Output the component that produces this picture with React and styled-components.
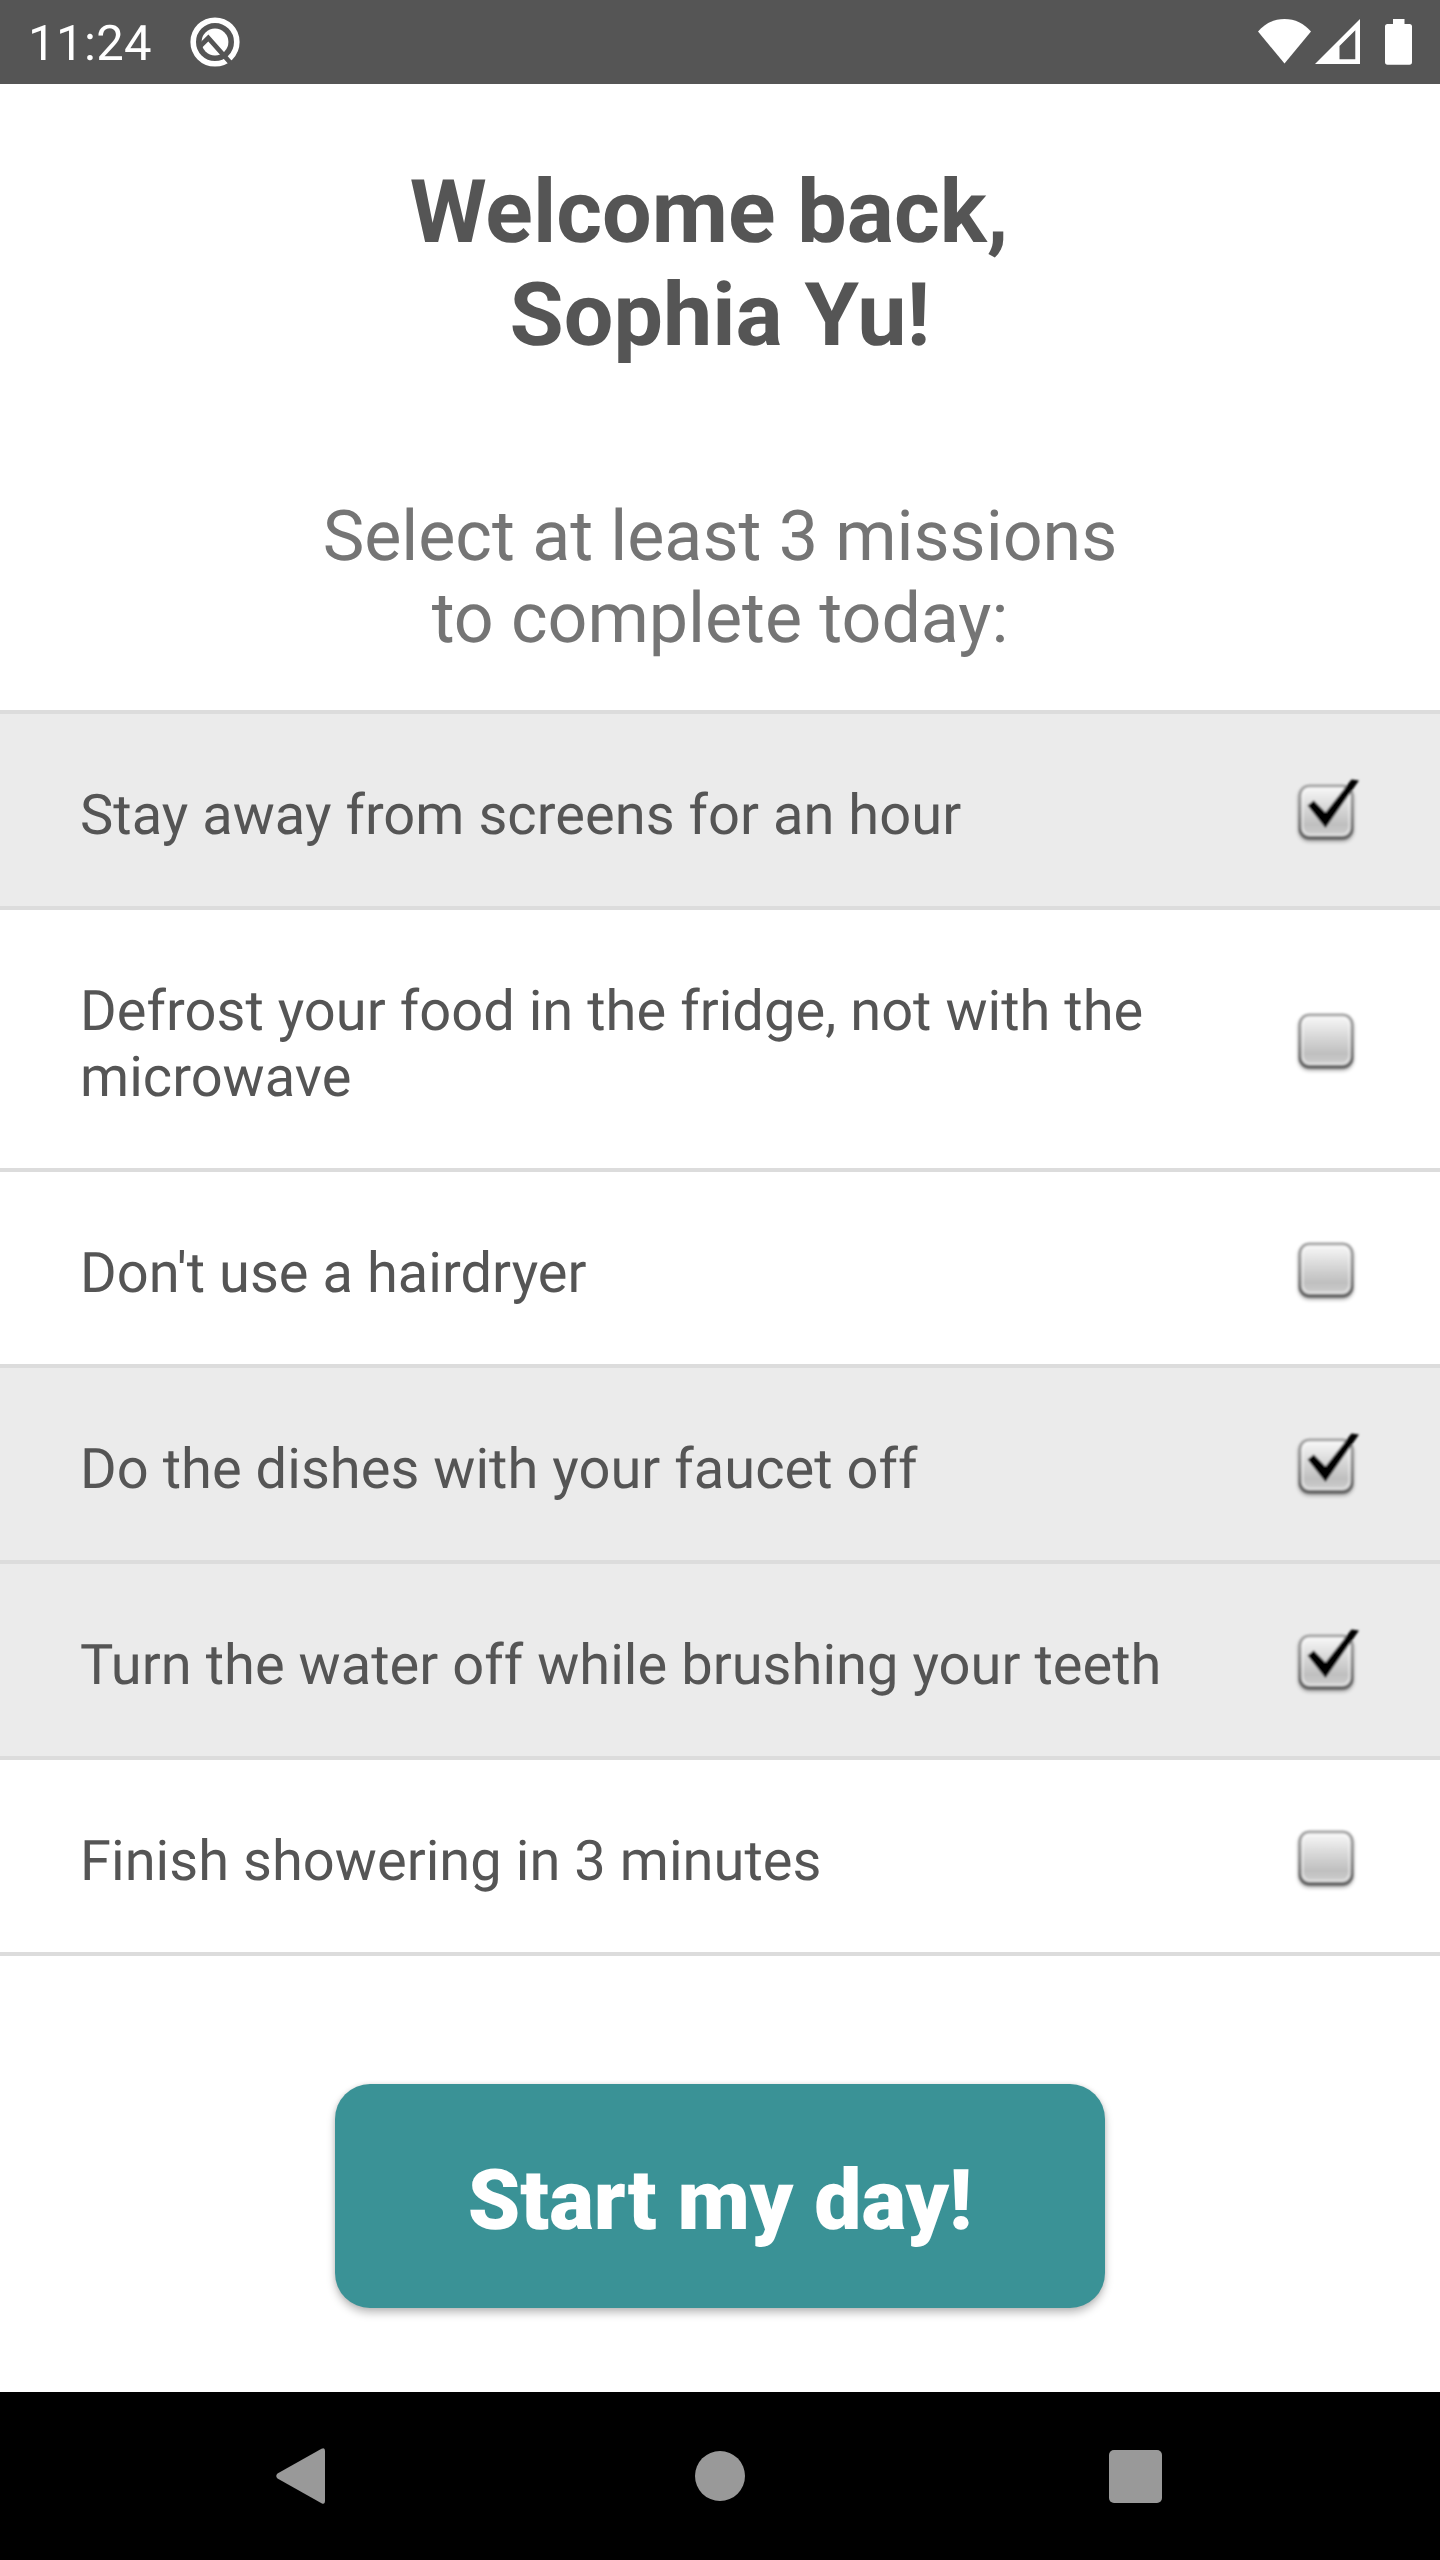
import React, { useState } from 'react'
import styled, { createGlobalStyle } from 'styled-components';

const GlobalStyle = createGlobalStyle`
    body {
        margin: 0;
        background: #ffffff;
        font-family: Roboto, sans-serif;
        text-rendering: geometricPrecision;
    }
`;

const missions = [
    { id: 1, text: 'Stay away from screens for an hour', done: true },
    { id: 2, text: 'Defrost your food in the fridge, not with the microwave', done: false },
    { id: 3, text: "Don't use a hairdryer", done: false },
    { id: 4, text: 'Do the dishes with your faucet off', done: true },
    { id: 5, text: 'Turn the water off while brushing your teeth', done: true },
    { id: 6, text: 'Finish showering in 3 minutes', done: false },
]

function StatusBar() {
    return (
        <StatusWrapper>
            <Clock>11:24</Clock>
            <svg width="50" height="50" viewBox="0 0 50 50">
                <circle cx="25" cy="25" r="21.8" fill="none" stroke="#fff" strokeWidth="5.6" />
                <circle cx="25" cy="25" r="13.4" fill="#fff" />
                <path d="M10 29.300L18.300 21L41 46.500" fill="none" stroke="#555" strokeWidth="4.8" />
            </svg>
            <Spacer />
            <StatusIcons>
                {/* wifi */}
                <svg width="53" height="45" viewBox="0 0 53 45">
                    <path d="M0 12.500C7 4.500 16 0 26.500 0S46 4.500 53 12.500L26.500 44.500Z" fill="#fff" />
                </svg>
                {/* signal */}
                <svg width="45" height="45" viewBox="0 0 45 45">
                    <path fillRule="evenodd" d="M0 45L45 0V45ZM24.500 27V40.300H40.300V11.300Z" fill="#fff" />
                </svg>
                {/* battery */}
                <Battery width="27" height="46" viewBox="0 0 27 46">
                    <path d="M8 0H19.500V5H24.500Q27 5 27 7.500V43Q27 45.700 24.500 45.700H2.500Q0 45.700 0 43V7.500Q0 5 2.500 5H8Z" fill="#fff" />
                </Battery>
            </StatusIcons>
        </StatusWrapper>
    )
}

function CheckBox({ checked }) {
    return (
        <svg width="84" height="84" viewBox="0 0 84 84">
            <defs>
                <linearGradient id="frame" x1="0" y1="0" x2="0" y2="1">
                    <stop offset="0" stopColor="#acacac" />
                    <stop offset="0.5" stopColor="#8c8c8c" />
                    <stop offset="1" stopColor="#606060" />
                </linearGradient>
                <linearGradient id="rim" x1="0" y1="0" x2="0" y2="1">
                    <stop offset="0" stopColor="#fbfbfb" />
                    <stop offset="1" stopColor="#dedede" />
                </linearGradient>
                <linearGradient id="face" x1="0" y1="0" x2="0" y2="1">
                    <stop offset="0" stopColor="#f4f4f4" />
                    <stop offset="0.5" stopColor="#d2d2d2" />
                    <stop offset="0.8" stopColor="#bfbfbf" />
                    <stop offset="1" stopColor="#cbcbcb" />
                </linearGradient>
                <filter id="shade" x="-20%" y="-20%" width="140%" height="140%">
                    <feGaussianBlur stdDeviation="2" />
                </filter>
                <filter id="soft" x="-10%" y="-10%" width="120%" height="120%">
                    <feGaussianBlur stdDeviation="0.8" />
                </filter>
            </defs>
            <rect x="14.500" y="17" width="55" height="54.500" rx="11" fill="#000" opacity="0.33" filter="url(#shade)" />
            <g filter="url(#soft)">
                <rect x="14.500" y="14.500" width="55" height="55" rx="11" fill="url(#frame)" />
                <rect x="17.500" y="17.500" width="49" height="48.500" rx="8" fill="url(#rim)" />
                <rect x="19.500" y="19.500" width="45" height="44" rx="6.500" fill="url(#face)" />
                {checked && <path d="M23.500 35.500L29.800 30.500L41.500 42.500L67.500 9.500L75 10.500L41.500 58Z" fill="#000" />}
            </g>
        </svg>
    )
}

function NavigationBar() {
    return (
        <NavWrapper>
            <NavButton>
                <svg width="58" height="56" viewBox="0 0 58 56">
                    <path d="M1.500 25.500L45.500 0.800Q49 -1 49 3V53Q49 57 45.500 55.200L1.500 30.500Q-1 28 1.500 25.500Z" fill="#999" />
                </svg>
            </NavButton>
            <NavButton>
                <svg width="50" height="50" viewBox="0 0 50 50">
                    <circle cx="25" cy="25" r="25" fill="#999" />
                </svg>
            </NavButton>
            <NavButton>
                <svg width="53" height="53" viewBox="0 0 53 53">
                    <rect width="53" height="53" rx="5" fill="#999" />
                </svg>
            </NavButton>
        </NavWrapper>
    )
}

function App() {
    const [items, setItems] = useState(missions)

    const toggle = (id) => {
        setItems(items.map(item => item.id === id ? { ...item, done: !item.done } : item))
    }

    return (
        <Screen>
            <GlobalStyle />
            <StatusBar />
            <Content>
                <Title>Welcome back,&nbsp;<br />Sophia Yu!</Title>
                <Subtitle>Select at least 3 missions<br />to complete today:</Subtitle>
                <MissionList>
                    {items.map(item => (
                        <MissionRow key={item.id} $done={item.done} onClick={() => toggle(item.id)}>
                            <MissionText>{item.text}</MissionText>
                            <CheckBox checked={item.done} />
                        </MissionRow>
                    ))}
                </MissionList>
                <StartButton>Start my day!</StartButton>
            </Content>
            <NavigationBar />
        </Screen>
    )
}

const Screen = styled.div`
    display: flex;
    flex-direction: column;
    width: 1440px;
    height: 2560px;
    overflow: hidden;
`;

const StatusWrapper = styled.header`
    display: flex;
    align-items: center;
    flex: none;
    height: 84px;
    box-sizing: border-box;
    padding: 0 28px;
    background: #555555;
    color: #ffffff;
`;

const Clock = styled.span`
    width: 162px;
    font-size: 49px;
    line-height: 58px;
    letter-spacing: 0.4px;
    padding-top: 4px;
`;

const Spacer = styled.div`
    flex: 1;
`;

const StatusIcons = styled.div`
    display: flex;
    align-items: flex-start;
    gap: 4px;
    height: 46px;
`;

const Battery = styled.svg`
    margin-left: 21px;
`;

const Content = styled.main`
    display: flex;
    flex-direction: column;
    align-items: center;
    flex: 1;
`;

const Title = styled.h1`
    margin: 77px 0 0;
    color: #555555;
    font-size: 88px;
    line-height: 103px;
    font-weight: 700;
    text-align: center;
`;

const Subtitle = styled.p`
    margin: 129px 0 0;
    color: #757575;
    font-size: 70px;
    line-height: 82px;
    letter-spacing: -0.05px;
    text-align: center;
`;

const MissionList = styled.ul`
    width: 100%;
    margin: 50px 0 0;
    padding: 0;
    list-style: none;
    border-top: 4px solid #dcdcdc;
`;

const MissionRow = styled.li`
    display: flex;
    align-items: center;
    justify-content: space-between;
    padding: 0 72px 0 80px;
    border-bottom: 4px solid #dcdcdc;
    background: ${props => props.$done ? '#ebebeb' : '#ffffff'};

    svg {
        margin-top: 4px;
    }
`;

const MissionText = styled.span`
    width: 1120px;
    padding: 68px 0 58px;
    color: #555555;
    font-size: 56px;
    line-height: 66px;
    letter-spacing: 0.04px;
`;

const StartButton = styled.button`
    width: 770px;
    height: 224px;
    margin-top: 128px;
    padding: 8px 0 0;
    border: 0;
    border-radius: 35px;
    background: #3a9296;
    box-shadow: 0 5px 9px rgba(0, 0, 0, 0.25), 0 0 4px rgba(0, 0, 0, 0.1);
    color: #ffffff;
    font-family: inherit;
    font-size: 84px;
    font-weight: 900;
    text-rendering: inherit;
`;

const NavWrapper = styled.nav`
    display: flex;
    align-items: center;
    justify-content: space-between;
    flex: none;
    height: 168px;
    padding: 0 200px;
    background: #000000;
`;

const NavButton = styled.div`
    display: flex;
    align-items: center;
    justify-content: center;
    width: 210px;
`;

export default App
